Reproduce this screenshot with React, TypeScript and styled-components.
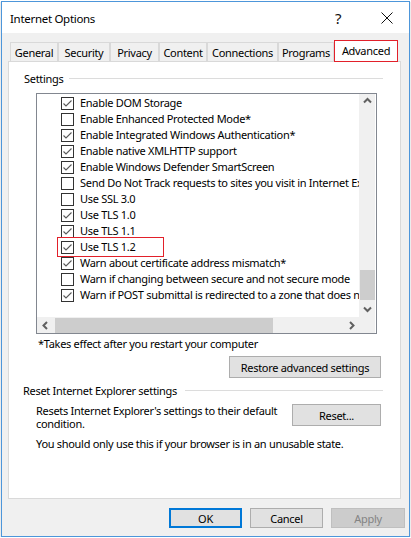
import React from "react";
import styled, { createGlobalStyle } from "styled-components";

const FONT = `"Segoe UI", "Noto Sans", "Open Sans", sans-serif`;

const GlobalStyle = createGlobalStyle`
  html, body {
    margin: 0;
    padding: 0;
    background: #ffffff;
  }
  body {
    font-family: ${FONT};
    font-size: 11px;
    letter-spacing: -0.3px;
    color: #000000;
  }
`;

const Window = styled.div`
  box-sizing: border-box;
  width: 409px;
  height: 536px;
  margin: 1px 0 0 1px;
  border: 1px solid #4d96da;
  box-shadow: 0 1px 1px rgba(0, 0, 0, 0.45);
  display: flex;
  flex-direction: column;
  background: #f0f0f0;
`;

const TitleBar = styled.div`
  height: 31px;
  background: #ffffff;
  display: flex;
  align-items: center;
  padding: 0 16px 0 8px;
  font-size: 11.5px;
`;

const Title = styled.div`
  flex: 1;
  padding-top: 2px;
`;

const HelpGlyph = styled.div`
  font-size: 15px;
  width: 12px;
  margin-right: 34px;
  color: #111;
  padding-top: 1px;
`;

const Body = styled.div`
  flex: 1;
  display: flex;
  flex-direction: column;
  padding: 7px 6px 0 6px;
`;

const TabRow = styled.div`
  display: flex;
  align-items: flex-end;
  height: 21px;
  padding-left: 2px;
  position: relative;
  z-index: 1;
`;

const Tab = styled.div<{ $w: number; $active?: boolean }>`
  box-sizing: border-box;
  width: ${(p) => p.$w}px;
  height: ${(p) => (p.$active ? 22 : 19)}px;
  margin-bottom: ${(p) => (p.$active ? -1 : 0)}px;
  background: ${(p) => (p.$active ? "#ffffff" : "#f0f0f0")};
  border: 1px solid ${(p) => (p.$active ? "#e2202a" : "#d9d9d9")};
  border-bottom: ${(p) => (p.$active ? "1px solid #e2202a" : "none")};
  border-left: ${(p) => (p.$active ? "1px solid #e2202a" : "1px solid #d9d9d9")};
  display: flex;
  align-items: ${(p) => (p.$active ? "flex-start" : "center")};
  justify-content: center;
  padding-top: ${(p) => (p.$active ? 2 : 0)}px;
  white-space: nowrap;
`;

const Panel = styled.div`
  box-sizing: border-box;
  width: 393px;
  height: 438px;
  background: #ffffff;
  border: 1px solid #d9d9d9;
  display: flex;
  flex-direction: column;
`;

const Legend = styled.div<{ $top: number; $left: number; $gap: number }>`
  display: flex;
  align-items: center;
  height: 16px;
  margin: ${(p) => p.$top}px 17px 0 ${(p) => p.$left}px;
  line-height: 16px;

  &::after {
    content: "";
    flex: 1;
    height: 1px;
    background: #dcdcdc;
    margin-left: ${(p) => p.$gap}px;
    margin-top: -1px;
  }
`;

const ListBox = styled.div`
  box-sizing: border-box;
  width: 341px;
  height: 241px;
  margin: 6px 0 0 27px;
  border: 1px solid #828790;
  display: grid;
  grid-template-columns: 322px 16px;
  grid-template-rows: 223px 16px;
`;

const ListContent = styled.div`
  overflow: hidden;
  padding-top: 1px;
  background: #ffffff;
`;

const Row = styled.div`
  position: relative;
  height: 16px;
  display: flex;
  align-items: center;
  padding-left: 24px;
  white-space: nowrap;
`;

const Label = styled.span`
  margin-left: 6px;
  line-height: 16px;
`;

const Highlight = styled.div`
  position: absolute;
  left: 20px;
  top: -2px;
  width: 107px;
  height: 20px;
  box-sizing: border-box;
  border: 1px solid #e2202a;
  pointer-events: none;
`;

const VScroll = styled.div`
  background: #f0f0f0;
  display: flex;
  flex-direction: column;
`;

const HScroll = styled.div`
  background: #f0f0f0;
  display: flex;
  align-items: center;
`;

const Corner = styled.div`
  background: #f0f0f0;
`;

const Arrow = styled.div`
  width: 16px;
  height: 16px;
  display: flex;
  align-items: center;
  justify-content: center;
  flex: none;
`;

const VTrack = styled.div`
  flex: 1;
  display: flex;
  flex-direction: column;
  justify-content: flex-end;
  align-items: center;
  padding-bottom: 1px;
`;

const VThumb = styled.div`
  width: 15px;
  height: 30px;
  background: #cdcdcd;
`;

const HTrack = styled.div`
  flex: 1;
  height: 16px;
  display: flex;
  align-items: center;
  padding-left: 2px;
`;

const HThumb = styled.div`
  width: 218px;
  height: 15px;
  background: #cdcdcd;
`;

const Note = styled.div`
  margin: 2px 0 0 29px;
  line-height: 16px;
`;

const Button = styled.button<{ $w: number; $default?: boolean; $disabled?: boolean }>`
  box-sizing: border-box;
  width: ${(p) => p.$w}px;
  height: ${(p) => (p.$default !== undefined ? 20 : 22)}px;
  font-family: ${FONT};
  font-size: 11px;
  letter-spacing: -0.3px;
  padding: 0;
  background: ${(p) => (p.$disabled ? "#cccccc" : "#e1e1e1")};
  color: ${(p) => (p.$disabled ? "#838383" : "#000000")};
  border: ${(p) => (p.$default ? "2px solid #0078d7" : p.$disabled ? "1px solid #bfbfbf" : "1px solid #adadad")};
  border-radius: 0;
  outline: none;
`;

const RestoreButton = styled(Button)`
  align-self: flex-end;
  margin: 4px 19px 0 0;
`;

const ResetRow = styled.div`
  display: flex;
  align-items: flex-start;
  margin: 5px 19px 0 27px;
`;

const ResetText = styled.div`
  width: 250px;
  line-height: 13px;
  flex: 1;
  padding-right: 10px;
`;

const Warning = styled.div`
  margin: 6px 0 0 27px;
  line-height: 16px;
`;

const Footer = styled.div`
  display: flex;
  justify-content: flex-end;
  gap: 8px;
  margin: 9px -2px 0 0;
`;

const Check = ({ checked }: { checked: boolean }) => (
  <svg width="13" height="13" viewBox="0 0 13 13" style={{ flex: "none" }}>
    <rect x="0.5" y="0.5" width="12" height="12" fill="#fff" stroke="#333333" />
    {checked && (
      <polyline points="2.5,6.5 5,9 10.5,3.5" fill="none" stroke="#5a5a5a" strokeWidth="1.1" />
    )}
  </svg>
);

const Chevron = ({ dir }: { dir: "up" | "down" | "left" | "right" }) => {
  const pts = {
    up: "4,7.5 7.5,4 11,7.5",
    down: "4,5.5 7.5,9 11,5.5",
    left: "9,4 5.5,7.5 9,11",
    right: "6,4 9.5,7.5 6,11",
  }[dir];
  return (
    <svg width="15" height="15" viewBox="0 0 15 15">
      <polyline points={pts} fill="none" stroke="#606060" strokeWidth="2" />
    </svg>
  );
};

const items: [string, boolean][] = [
  ["Enable DOM Storage", true],
  ["Enable Enhanced Protected Mode*", false],
  ["Enable Integrated Windows Authentication*", true],
  ["Enable native XMLHTTP support", true],
  ["Enable Windows Defender SmartScreen", true],
  ["Send Do Not Track requests to sites you visit in Internet Explorer*", false],
  ["Use SSL 3.0", false],
  ["Use TLS 1.0", true],
  ["Use TLS 1.1", true],
  ["Use TLS 1.2", true],
  ["Warn about certificate address mismatch*", true],
  ["Warn if changing between secure and not secure mode", false],
  ["Warn if POST submittal is redirected to a zone that does not permit posts", true],
];

const tabs: [string, number][] = [
  ["General", 48],
  ["Security", 52],
  ["Privacy", 49],
  ["Content", 48],
  ["Connections", 71],
  ["Programs", 56],
];

export default function App() {
  return (
    <>
      <GlobalStyle />
      <Window>
        <TitleBar>
          <Title>Internet Options</Title>
          <HelpGlyph>?</HelpGlyph>
          <svg width="12" height="12" viewBox="0 0 12 12">
            <path d="M0.5 0.5 L11.5 11.5 M11.5 0.5 L0.5 11.5" stroke="#111" strokeWidth="1" />
          </svg>
        </TitleBar>
        <Body>
          <TabRow>
            {tabs.map(([t, w]) => (
              <Tab key={t} $w={w}>
                {t}
              </Tab>
            ))}
            <Tab $w={64} $active>
              Advanced
            </Tab>
          </TabRow>
          <Panel>
            <Legend $top={9} $left={15} $gap={6}>
              Settings
            </Legend>
            <ListBox>
              <ListContent>
                {items.map(([text, checked], i) => (
                  <Row key={i}>
                    <Check checked={checked} />
                    <Label>{text}</Label>
                    {text === "Use TLS 1.2" && <Highlight />}
                  </Row>
                ))}
              </ListContent>
              <VScroll>
                <Arrow>
                  <Chevron dir="up" />
                </Arrow>
                <VTrack>
                  <VThumb />
                </VTrack>
                <Arrow>
                  <Chevron dir="down" />
                </Arrow>
              </VScroll>
              <HScroll>
                <Arrow>
                  <Chevron dir="left" />
                </Arrow>
                <HTrack>
                  <HThumb />
                </HTrack>
                <Arrow>
                  <Chevron dir="right" />
                </Arrow>
              </HScroll>
              <Corner />
            </ListBox>
            <Note>*Takes effect after you restart your computer</Note>
            <RestoreButton $w={152}>Restore advanced settings</RestoreButton>
            <Legend $top={5} $left={14} $gap={8}>
              Reset Internet Explorer settings
            </Legend>
            <ResetRow>
              <ResetText>Resets Internet Explorer's settings to their default condition.</ResetText>
              <Button $w={89}>Reset...</Button>
            </ResetRow>
            <Warning>You should only use this if your browser is in an unusable state.</Warning>
          </Panel>
          <Footer>
            <Button $w={73} $default>
              OK
            </Button>
            <Button $w={73} $default={false}>
              Cancel
            </Button>
            <Button $w={74} $default={false} $disabled>
              Apply
            </Button>
          </Footer>
        </Body>
      </Window>
    </>
  );
}
